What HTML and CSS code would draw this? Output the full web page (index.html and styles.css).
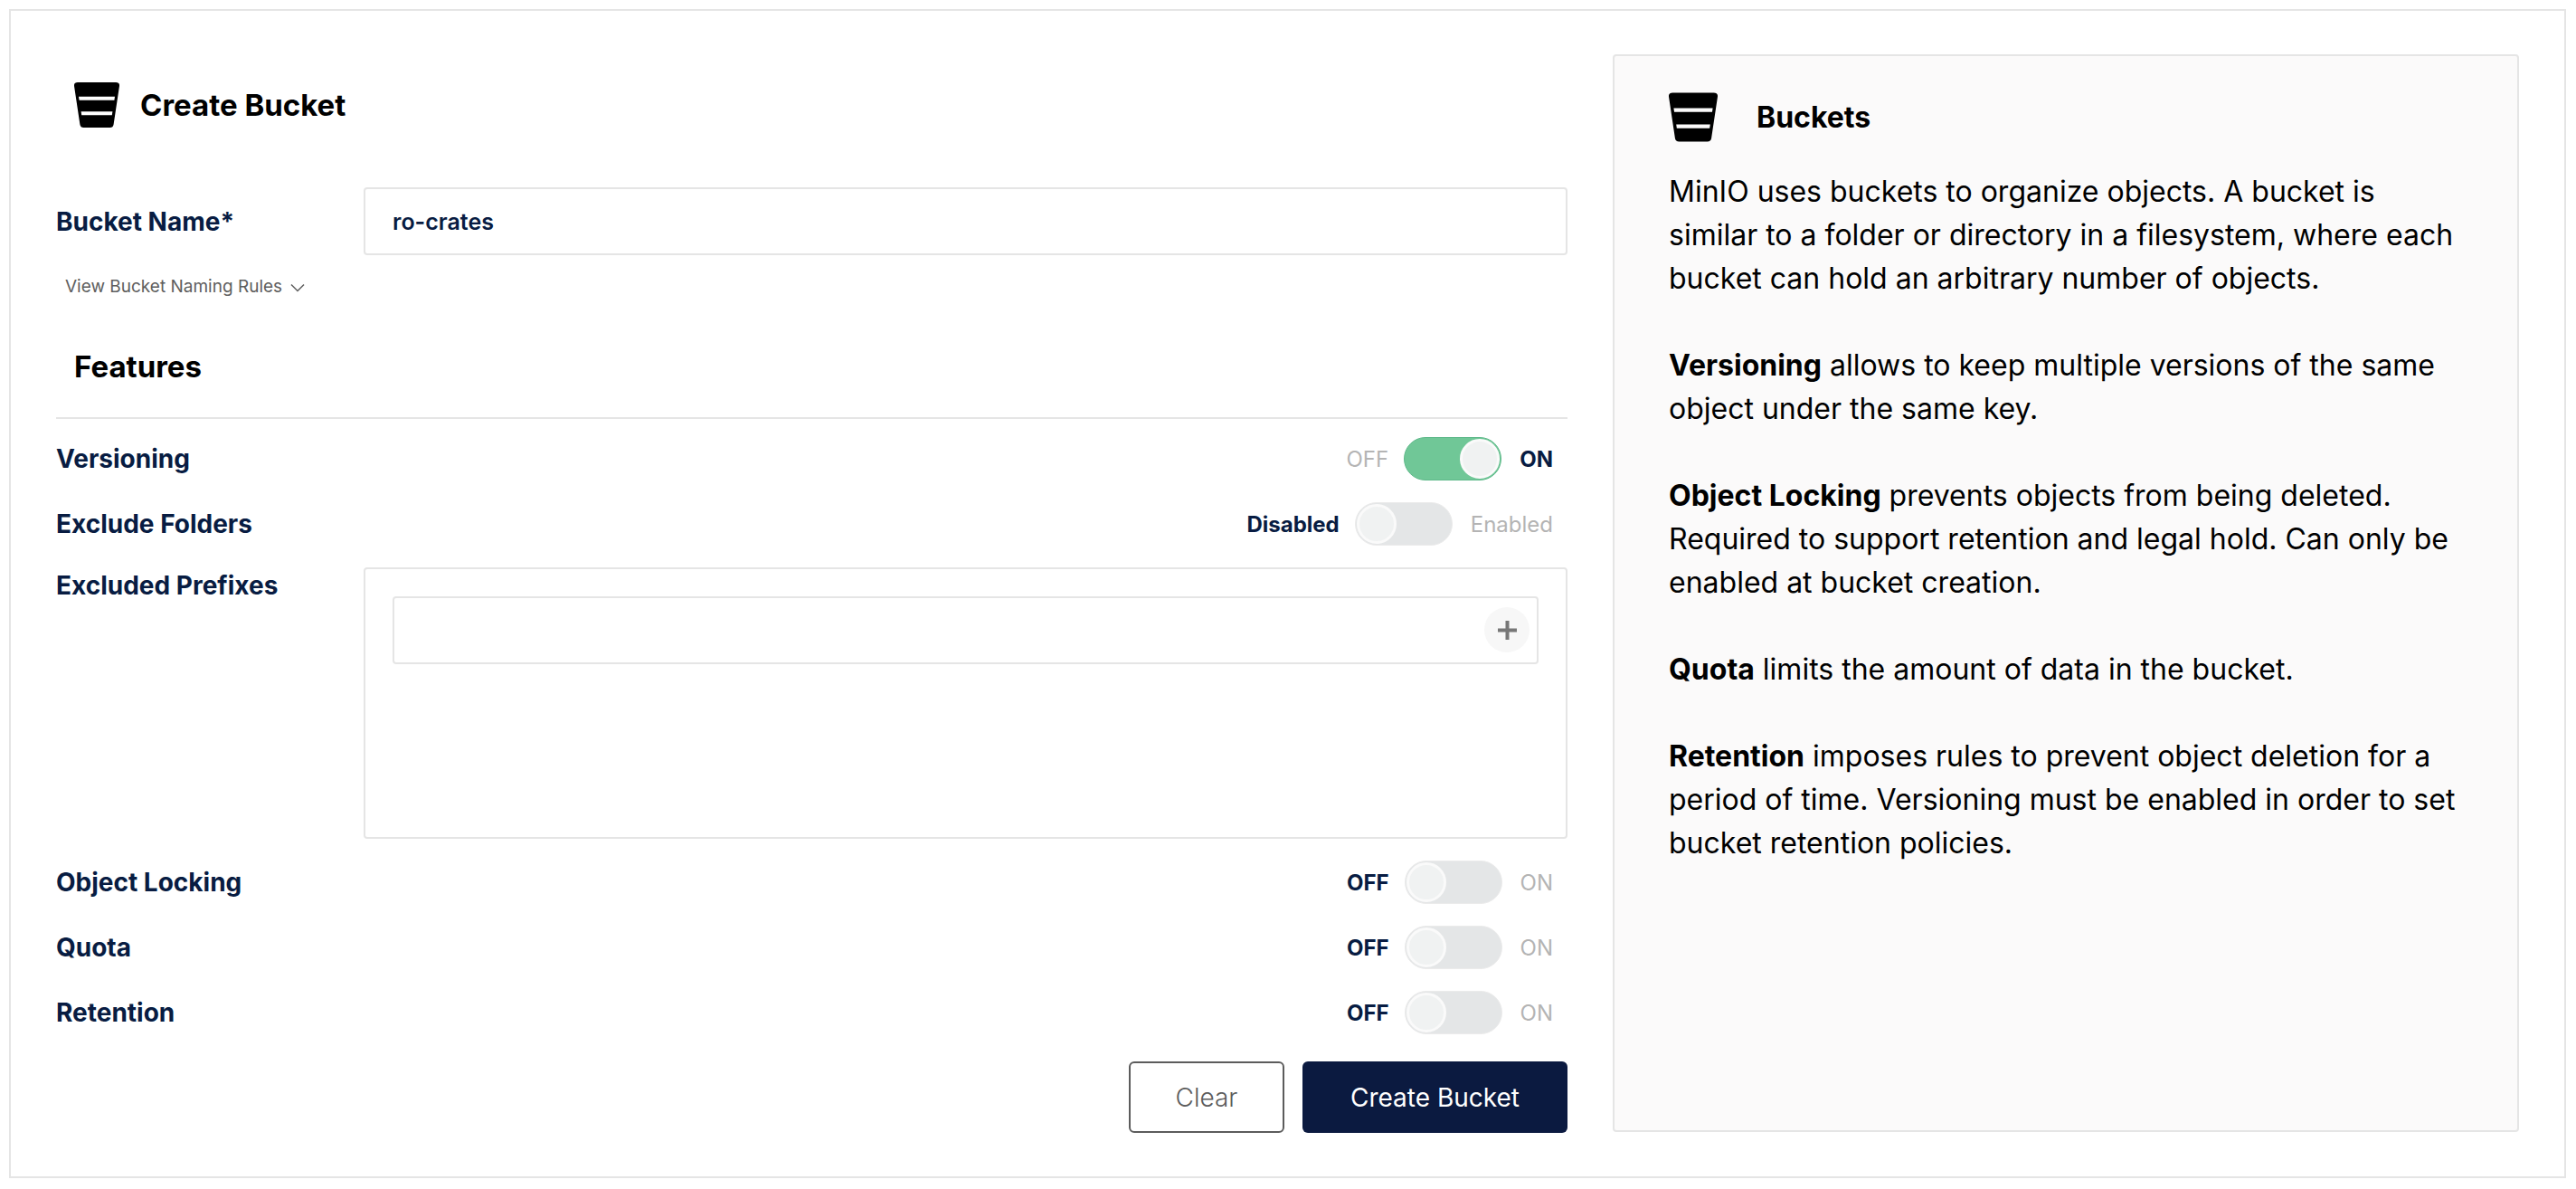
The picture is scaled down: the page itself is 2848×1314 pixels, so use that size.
FILE: index.html
```html
<!DOCTYPE html>
<html lang="en">
<head>
    <meta charset="UTF-8">
    <title>Create Bucket</title>
    <link rel="stylesheet" href="styles.css">
</head>
<body>
    <svg class="defs" width="0" height="0">
        <symbol id="bucket" viewBox="0 0 50 50">
            <path fill-rule="evenodd" d="M4 0H46Q50.400 0 50 4L43.600 46.500Q43 50 39.500 50H10.500Q7 50 6.400 46.500L0 4Q-.4 0 4 0ZM5 15.700 5.600 19.700H44.400L45 15.700ZM7.600 32.300 8.200 36.300H41.800L42.400 32.300Z"/>
        </symbol>
    </svg>
    <div class="card">
        <form class="form">
            <div class="title">
                <svg class="icon"><use href="#bucket"/></svg>
                <h1>Create Bucket</h1>
            </div>

            <div class="name-row">
                <label for="bucketName">Bucket Name*</label>
                <input type="text" id="bucketName" class="text-input" value="ro-crates">
            </div>
            <a class="rules">View Bucket Naming Rules
                <svg class="chevron" viewBox="0 0 16 10"><path d="M1 1.500 8 8.500 15 1.500"/></svg>
            </a>

            <h2>Features</h2>

            <div class="row">
                <span class="label">Versioning</span>
                <div class="switch on">
                    <span class="off-text">OFF</span>
                    <span class="track"><span class="knob"></span></span>
                    <span class="on-text">ON</span>
                </div>
            </div>
            <div class="row">
                <span class="label">Exclude Folders</span>
                <div class="switch">
                    <span class="off-text">Disabled</span>
                    <span class="track"><span class="knob"></span></span>
                    <span class="on-text">Enabled</span>
                </div>
            </div>

            <div class="prefix-row">
                <label for="prefix">Excluded Prefixes</label>
                <div class="prefix-box">
                    <div class="prefix-input">
                        <input type="text" id="prefix" class="text-input">
                        <button type="button" class="add" aria-label="Add">
                            <svg viewBox="0 0 21 21"><path d="M10.500 0V21M0 10.500H21"/></svg>
                        </button>
                    </div>
                </div>
            </div>

            <div class="row">
                <span class="label">Object Locking</span>
                <div class="switch">
                    <span class="off-text">OFF</span>
                    <span class="track"><span class="knob"></span></span>
                    <span class="on-text">ON</span>
                </div>
            </div>
            <div class="row">
                <span class="label">Quota</span>
                <div class="switch">
                    <span class="off-text">OFF</span>
                    <span class="track"><span class="knob"></span></span>
                    <span class="on-text">ON</span>
                </div>
            </div>
            <div class="row">
                <span class="label">Retention</span>
                <div class="switch">
                    <span class="off-text">OFF</span>
                    <span class="track"><span class="knob"></span></span>
                    <span class="on-text">ON</span>
                </div>
            </div>

            <div class="actions">
                <button type="button" class="btn btn-clear">Clear</button>
                <button type="button" class="btn btn-create">Create Bucket</button>
            </div>
        </form>

        <aside class="help">
            <div class="help-head">
                <svg class="icon"><use href="#bucket"/></svg>
                <h3>Buckets</h3>
            </div>
            <p>MinIO uses buckets to organize objects. A bucket is similar to a folder or directory in a filesystem, where each bucket can hold an arbitrary number of objects.</p>
            <p><b>Versioning</b> allows to keep multiple versions of the same object under the same key.</p>
            <p><b>Object Locking</b> prevents objects from being deleted. Required to support retention and legal hold. Can only be enabled at bucket creation.</p>
            <p><b>Quota</b> limits the amount of data in the bucket.</p>
            <p><b>Retention</b> imposes rules to prevent object deletion for a period of time. Versioning must be enabled in order to set bucket retention policies.</p>
        </aside>
    </div>
</body>
</html>
```

FILE: styles.css
```css
* {
    box-sizing: border-box;
}

body {
    margin: 0;
    padding: 10px 11px 12px 10px;
    height: 1314px;
    background: #fff;
    color: #000;
    font-family: Inter, "Liberation Sans", sans-serif;
}

.defs {
    position: absolute;
}

.card {
    display: flex;
    gap: 50px;
    height: 100%;
    padding: 48px 50px 49px;
    border: 2px solid #e5e5e5;
}

.form {
    width: 1671px;
    flex: none;
}

.title {
    display: flex;
    align-items: center;
    gap: 23px;
    height: 147px;
    padding: 31px 0 66px 20px;
}

.icon {
    width: 50px;
    height: 50px;
    flex: none;
}

h1, h2, h3 {
    margin: 0;
    font-size: 32px;
    font-weight: 700;
}

h1, h2 {
    font-size: 33px;
}

.name-row {
    display: flex;
    align-items: center;
}

label, .label {
    font-size: 28px;
    font-weight: 700;
    color: #081c42;
}

.name-row label, .prefix-row label {
    width: 340px;
    flex: none;
}

.text-input {
    width: 100%;
    height: 75px;
    padding: 0 30px;
    border: 2px solid #e5e5e5;
    border-radius: 4px;
    background: #fff;
    color: #081c42;
    font-family: inherit;
    font-size: 25px;
    font-weight: 600;
}

.rules {
    display: flex;
    align-items: center;
    gap: 9px;
    height: 38px;
    margin: 15px 0 0 10px;
    font-size: 19px;
    color: #5e5e5e;
}

.chevron {
    width: 16px;
    height: 10px;
    margin-top: 3px;
    fill: none;
    stroke: #5e5e5e;
    stroke-width: 1.5;
}

h2 {
    height: 128px;
    margin-bottom: 8px;
    padding: 51px 0 0 20px;
    border-bottom: 2px solid #e5e5e5;
    line-height: 38px;
}

.row {
    display: flex;
    align-items: center;
    justify-content: space-between;
    height: 72px;
}

.switch {
    display: flex;
    align-items: center;
    padding-right: 16px;
    font-size: 24px;
    color: #b4b4b4;
}

.off-text {
    margin-right: 17px;
    font-weight: 700;
    color: #081c42;
}

.on-text {
    margin-left: 20px;
}

.switch.on .off-text {
    font-weight: 400;
    color: #b4b4b4;
}

.switch.on .on-text {
    font-weight: 700;
    color: #081c42;
}

.track {
    display: flex;
    align-items: center;
    width: 108px;
    height: 48px;
    padding: 0 1px;
    border: 1px solid #ebebeb;
    border-radius: 24px;
    background: #e4e6e7;
}

.knob {
    width: 44px;
    height: 44px;
    border: 3px solid #fafafa;
    border-radius: 50%;
    background: #f0f2f2;
}

.switch.on .track {
    justify-content: flex-end;
    border-color: #5fb98a;
    background: #70c797;
}

.prefix-row {
    display: flex;
    margin: 12px 0;
}

.prefix-row label {
    padding-top: 3px;
}

.prefix-box {
    flex: 1;
    height: 300px;
    padding: 30px;
    border: 2px solid #e5e5e5;
    border-radius: 4px;
}

.prefix-input {
    position: relative;
}

.add {
    position: absolute;
    top: 12px;
    right: 10px;
    display: flex;
    align-items: center;
    justify-content: center;
    width: 50px;
    height: 50px;
    padding: 0;
    border: none;
    border-radius: 50%;
    background: #f7f7f7;
}

.add svg {
    width: 21px;
    height: 21px;
    fill: none;
    stroke: #777;
    stroke-width: 4;
}

.actions {
    display: flex;
    justify-content: flex-end;
    gap: 20px;
    margin-top: 18px;
}

.btn {
    height: 79px;
    border-radius: 6px;
    font-family: inherit;
    font-size: 28px;
}

.btn-clear {
    width: 172px;
    border: 2px solid #5c5c5c;
    background: #fff;
    color: #5c5c5c;
    font-weight: 300;
}

.btn-create {
    width: 293px;
    border: none;
    background: #0b1a40;
    color: #fff;
}

.help {
    flex: 1;
    padding: 40px 60px 0;
    border: 2px solid #e5e5e5;
    border-radius: 4px;
    background: #fbfafa;
}

.help-head {
    display: flex;
    align-items: center;
    gap: 43px;
    margin-bottom: 31px;
}

.help-head .icon {
    width: 54px;
    height: 55px;
}

p {
    margin: 0 0 48px;
    font-size: 32px;
    line-height: 48px;
}

b {
    font-weight: 700;
}
```
